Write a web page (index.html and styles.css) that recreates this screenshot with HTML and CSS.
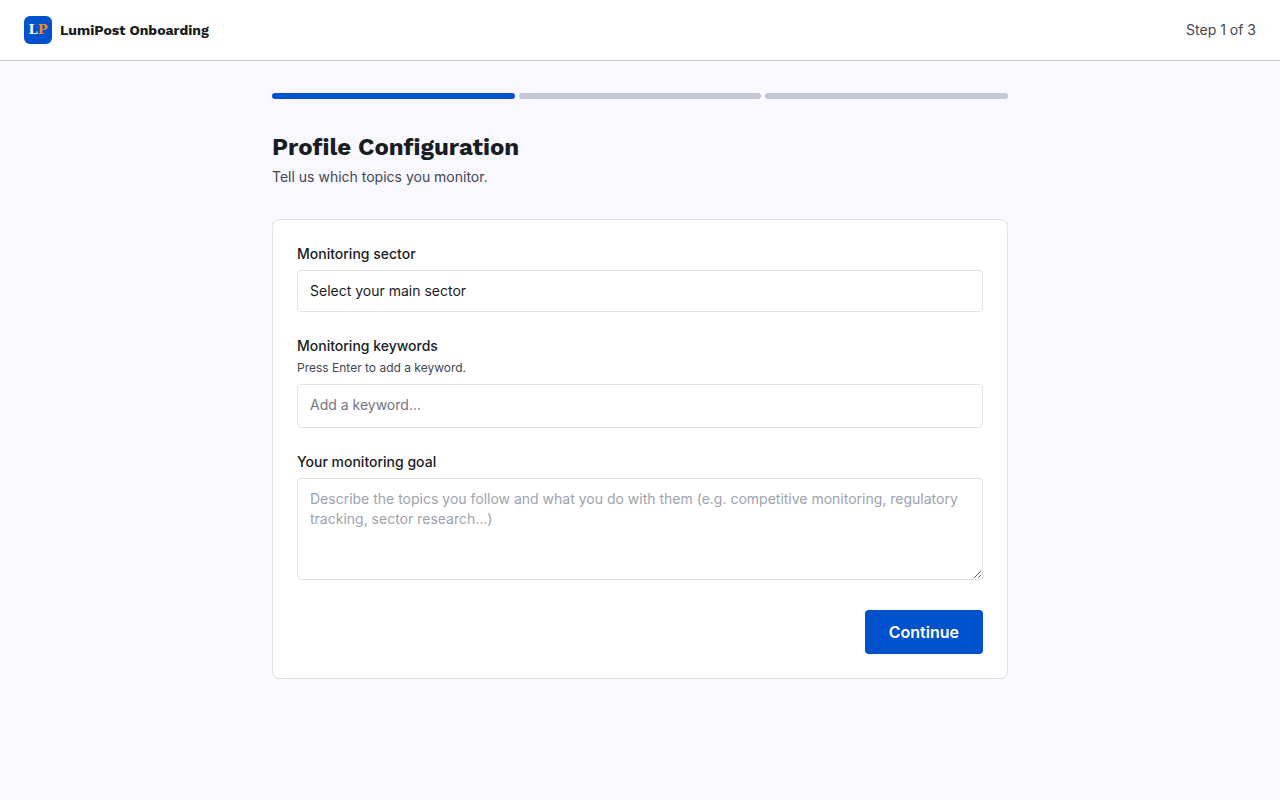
FILE: index.html
```html
<!DOCTYPE html>
<html lang="en">
<head>
    <meta charset="UTF-8">
    <meta name="viewport" content="width=device-width, initial-scale=1.0">
    <title>LumiPost Onboarding</title>
    <link rel="stylesheet" href="styles.css">
</head>
<body>
    <header class="topbar">
        <div class="brand">
            <svg class="logo" viewBox="0 0 28 28" role="img" aria-label="LumiPost">
                <rect width="28" height="28" rx="6" fill="#0052cc"/>
                <text class="logo-text" x="14" y="18" text-anchor="middle"><tspan fill="#ffffff">L</tspan><tspan fill="#f28c13">P</tspan></text>
            </svg>
            <span class="brand-name">LumiPost Onboarding</span>
        </div>
        <span class="step">Step 1 of 3</span>
    </header>

    <main class="content">
        <div class="progress">
            <span class="bar active"></span>
            <span class="bar"></span>
            <span class="bar"></span>
        </div>

        <h1>Profile Configuration</h1>
        <p class="subtitle">Tell us which topics you monitor.</p>

        <form class="card">
            <div class="field">
                <label for="sector">Monitoring sector</label>
                <select id="sector">
                    <option>Select your main sector</option>
                </select>
            </div>

            <div class="field">
                <label for="keywords">Monitoring keywords</label>
                <p class="hint" id="keywords-hint">Press Enter to add a keyword.</p>
                <input type="text" id="keywords" placeholder="Add a keyword..." aria-describedby="keywords-hint">
            </div>

            <div class="field">
                <label for="goal">Your monitoring goal</label>
                <textarea id="goal" rows="4" placeholder="Describe the topics you follow and what you do with them (e.g. competitive monitoring, regulatory tracking, sector research...)"></textarea>
            </div>

            <div class="actions">
                <button type="button">Continue</button>
            </div>
        </form>
    </main>
</body>
</html>
```
FILE: styles.css
```css
* {
    box-sizing: border-box;
}
body {
    margin: 0;
    background: #f9f8ff;
    color: #181c23;
    font-family: Inter, sans-serif;
    font-size: 14px;
    line-height: 20px;
}
h1, p {
    margin: 0;
}

/* header */
.topbar {
    display: flex;
    align-items: center;
    justify-content: space-between;
    padding: 16px 24px;
    background: #ffffff;
    border-bottom: 1px solid #c3c6d6;
}
.brand {
    display: flex;
    align-items: center;
    gap: 8px;
}
.logo {
    width: 28px;
    height: 28px;
}
.logo-text {
    font-family: "DejaVu Serif", serif;
    font-size: 13px;
    font-weight: 700;
}
.brand-name {
    font-family: "Work Sans", Inter, sans-serif;
    font-weight: 700;
}
.step {
    color: #434654;
}

/* steps */
.content {
    max-width: 768px;
    margin: 0 auto;
    padding: 32px 16px;
}
.progress {
    display: flex;
    gap: 4px;
    margin-bottom: 32px;
}
.bar {
    flex: 1;
    height: 6px;
    border-radius: 3px;
    background: #c3c6d6;
}
.bar.active {
    background: #0052cc;
}
h1 {
    font-family: "Work Sans", Inter, sans-serif;
    font-size: 24px;
    font-weight: 700;
    line-height: 32px;
}
.subtitle {
    margin: 4px 0 32px;
    color: #434654;
}

/* form */
.card {
    padding: 24px;
    background: #ffffff;
    border: 1px solid #dfe1e6;
    border-radius: 8px;
}
.field {
    margin-bottom: 24px;
}
label {
    display: block;
    margin-bottom: 6px;
    font-weight: 500;
}
.hint {
    margin: -2px 0 8px;
    color: #434654;
    font-size: 12px;
    line-height: 16px;
}
select, input, textarea {
    display: block;
    width: 100%;
    padding: 10px 12px;
    background: #ffffff;
    border: 1px solid #dfe1e6;
    border-radius: 4px;
    color: #181c23;
    font: inherit;
}
select {
    appearance: none;
}
input {
    padding-bottom: 12px;
}
input::placeholder {
    color: #737685;
}
textarea {
    resize: vertical;
}
textarea::placeholder {
    color: #9ca3af;
}
.actions {
    display: flex;
    justify-content: flex-end;
    padding-top: 6px;
}
button {
    padding: 10px 24px;
    background: #0052cc;
    border: none;
    border-radius: 4px;
    color: #ffffff;
    font: inherit;
    font-size: 16px;
    font-weight: 600;
    line-height: 24px;
}
```
